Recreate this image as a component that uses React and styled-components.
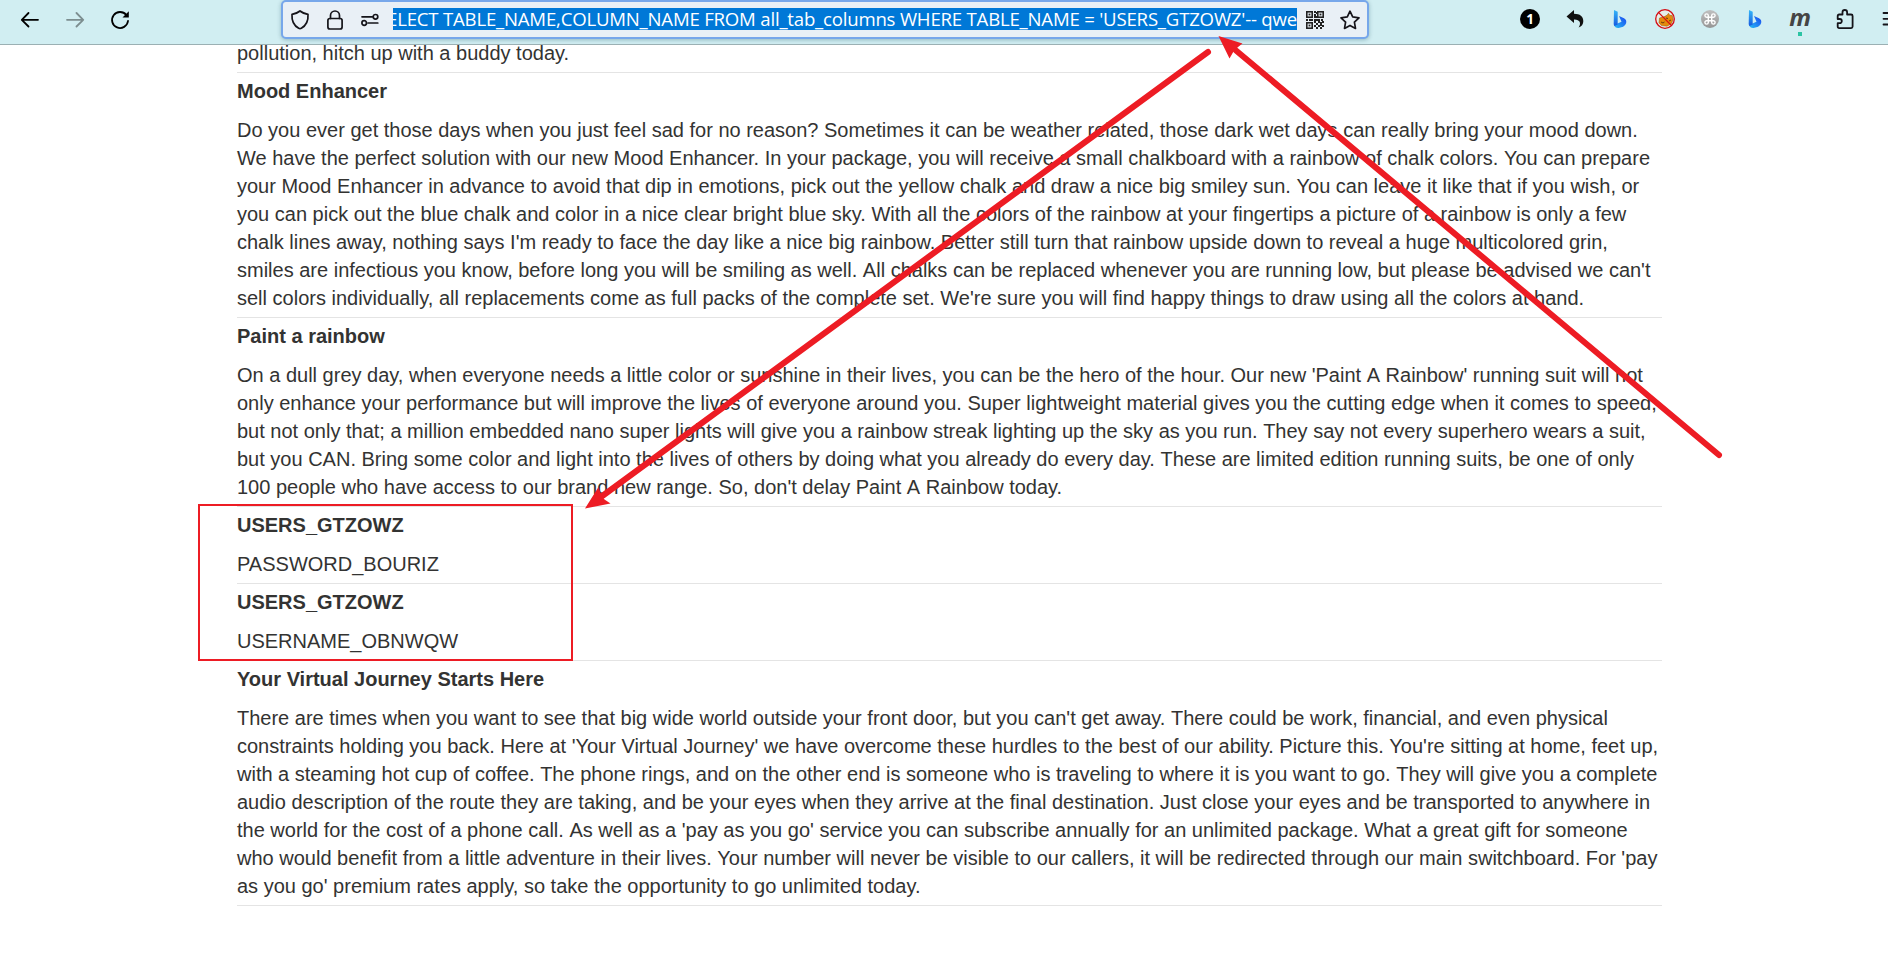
import React from "react";
import styled, { createGlobalStyle, css } from "styled-components";

const GlobalStyle = createGlobalStyle`
  html, body { margin: 0; padding: 0; background: #fff; }
  * { box-sizing: border-box; }
`;

const Window = styled.div`
  position: relative;
  display: flex;
  flex-direction: column;
  width: 1888px;
  height: 954px;
  overflow: hidden;
  background: #fff;
`;

const Toolbar = styled.header`
  flex: none;
  display: flex;
  align-items: flex-start;
  height: 45px;
  background: #d1eef2;
  border-bottom: 1px solid #9bb0b3;
  overflow: hidden;
`;

const NavGroup = styled.nav`
  flex: none;
  display: flex;
  width: 281px;
  padding: 5px 0 0 15px;
  gap: 15px;
`;

const IconSlot = styled.span`
  flex: none;
  display: flex;
  align-items: center;
  justify-content: center;
  width: 30px;
  height: 30px;
  opacity: ${(p) => (p.$dim ? 0.4 : 1)};
  svg { display: block; overflow: visible; }
`;

const AddressBar = styled.div`
  flex: none;
  display: flex;
  align-items: center;
  width: 1088px;
  height: 39px;
  padding: 0 2px;
  background: #e9f0f6;
  border: 2px solid #77a7ea;
  border-radius: 5px;
  box-shadow: 0 1px 4px rgba(0, 60, 80, 0.3);
`;

const AddressIcons = styled.div`
  flex: none;
  display: flex;
  gap: 5px;
  ${(p) =>
    p.$side === "start"
      ? css`width: 108px;`
      : css`padding-left: 3px;`}
`;

const Selection = styled.div`
  flex: none;
  display: flex;
  justify-content: flex-end;
  width: 904px;
  height: 22px;
  margin-bottom: 1px;
  overflow: hidden;
  background: #0078d7;
  color: #fff;
  font: 18.6px/22px "Open Sans", "Noto Sans", sans-serif;
  letter-spacing: -0.2px;
  white-space: pre;
`;

const Extensions = styled.div`
  flex: none;
  display: flex;
  gap: 15px;
  padding: 4px 0 0 146px;
`;

const MarkSlot = styled(IconSlot)`
  flex-direction: column;
  justify-content: flex-start;
  height: 36px;
  color: #454545;
  font: italic bold 24px/28px "Open Sans", "Noto Sans", sans-serif;
`;

const MarkLetter = styled.span`
  height: 28px;
  margin-top: -1px;
  margin-bottom: 1px;
`;

const ActiveDot = styled.i`
  width: 4px;
  height: 4px;
  background: #2bc4a4;
`;

const Page = styled.main`
  flex: 1;
  overflow: hidden;
  padding-left: 237px;
  color: #333332;
  font: 20px/28px "Liberation Sans", Arial, sans-serif;
`;

const Listing = styled.div`
  width: 1424.6px;
  margin-top: -6px;
`;

const Entry = styled.section`
  padding-bottom: 5px;
  border-bottom: 1px solid #e4e4e4;
`;

const Title = styled.h2`
  margin: 0;
  padding: 4px 0 11px;
  font: bold 20px/28px "Liberation Sans", Arial, sans-serif;
`;

const Line = styled.div`
  height: 28px;
  white-space: pre;
`;

const PlainSpace = styled.span`
  font-kerning: none;
`;

const Annotations = styled.svg`
  position: absolute;
  inset: 0;
  pointer-events: none;
`;

const entries = [
  { lines: ["pollution, hitch up with a buddy today."] },
  {
    title: "Mood Enhancer",
    lines: [
      "Do you ever get those days when you just feel sad for no reason? Sometimes it can be weather related, those dark wet days can really bring your mood down.",
      "We have the perfect solution with our new Mood Enhancer. In your package, you will receive a small chalkboard with a rainbow of chalk colors. You can prepare",
      "your Mood Enhancer in advance to avoid that dip in emotions, pick out the yellow chalk and draw a nice big smiley sun. You can leave it like that if you wish, or",
      "you can pick out the blue chalk and color in a nice clear bright blue sky. With all the colors of the rainbow at your fingertips a picture of a rainbow is only a few",
      "chalk lines away, nothing says I'm ready to face the day like a nice big rainbow. Better still turn that rainbow upside down to reveal a huge multicolored grin,",
      "smiles are infectious you know, before long you will be smiling as well. All chalks can be replaced whenever you are running low, but please be advised we can't",
      "sell colors individually, all replacements come as full packs of the complete set. We're sure you will find happy things to draw using all the colors at hand.",
    ],
  },
  {
    title: "Paint a rainbow",
    lines: [
      "On a dull grey day, when everyone needs a little color or sunshine in their lives, you can be the hero of the hour. Our new 'Paint A Rainbow' running suit will not",
      "only enhance your performance but will improve the lives of everyone around you. Super lightweight material gives you the cutting edge when it comes to speed,",
      "but not only that; a million embedded nano super lights will give you a rainbow streak lighting up the sky as you run. They say not every superhero wears a suit,",
      "but you CAN. Bring some color and light into the lives of others by doing what you already do every day. These are limited edition running suits, be one of only",
      "100 people who have access to our brand new range. So, don't delay Paint A Rainbow today.",
    ],
  },
  { title: "USERS_GTZOWZ", lines: ["PASSWORD_BOURIZ"] },
  { title: "USERS_GTZOWZ", lines: ["USERNAME_OBNWQW"] },
  {
    title: "Your Virtual Journey Starts Here",
    lines: [
      "There are times when you want to see that big wide world outside your front door, but you can't get away. There could be work, financial, and even physical",
      "constraints holding you back. Here at 'Your Virtual Journey' we have overcome these hurdles to the best of our ability. Picture this. You're sitting at home, feet up,",
      "with a steaming hot cup of coffee. The phone rings, and on the other end is someone who is traveling to where it is you want to go. They will give you a complete",
      "audio description of the route they are taking, and be your eyes when they arrive at the final destination. Just close your eyes and be transported to anywhere in",
      "the world for the cost of a phone call. As well as a 'pay as you go' service you can subscribe annually for an unlimited package. What a great gift for someone",
      "who would benefit from a little adventure in their lives. Your number will never be visible to our callers, it will be redirected through our main switchboard. For 'pay",
      "as you go' premium rates apply, so take the opportunity to go unlimited today.",
    ],
  },
];

// Spaces next to A, T and Y keep their full advance instead of being kerned.
const BodyText = ({ text }) =>
  text
    .split(/( (?=[ATY])|(?<=A) )/)
    .map((part, i) => (part === " " ? <PlainSpace key={i}> </PlainSpace> : part));

const stroke = (w = 1.7) => ({
  fill: "none",
  stroke: "#15141a",
  strokeWidth: w,
  strokeLinecap: "round",
  strokeLinejoin: "round",
});

const ArrowIcon = ({ flip }) => (
  <svg width="20" height="20" viewBox="0 0 20 20" transform={flip ? "scale(-1 1)" : undefined}>
    <path {...stroke(1.8)} stroke="#000" d="M18 9.8H2M8.5 3 1.8 9.8l6.7 6.7" />
  </svg>
);

const ReloadIcon = () => (
  <svg width="20" height="20" viewBox="0 0 20 20">
    <path {...stroke(1.8)} stroke="#000" d="M16.3 5A8 8 0 1 0 18 11" />
    <path fill="#000" d="M18.8 1.2v6.3h-6.3z" />
  </svg>
);

const ShieldIcon = () => (
  <svg width="20" height="20" viewBox="0 0 20 20">
    <path {...stroke()} d="M10 1c2 1.8 4.7 2.7 8 3.3.4 5.8-1.8 11.3-6.7 14q-1.3.7-2.6 0C3.8 15.6 1.6 10.1 2 4.3 5.3 3.700 8 2.800 10 1z" />
  </svg>
);

const LockIcon = () => (
  <svg width="20" height="20" viewBox="0 0 20 20">
    <rect {...stroke()} x="2.900" y="8.500" width="14.200" height="10.500" rx="2" />
    <path {...stroke()} d="M5.500 8.500v-3a4.500 4.500 0 0 1 9 0v3" />
  </svg>
);

const PermissionsIcon = () => (
  <svg width="20" height="20" viewBox="0 0 20 20">
    <path {...stroke()} d="M2 6.800h10.500M8 13h9.800" />
    <circle {...stroke()} cx="15.500" cy="6.800" r="2.300" />
    <circle {...stroke()} cx="4.200" cy="13" r="2.300" />
  </svg>
);

const QR_CELLS = [
  [8, 0], [10, 1], [8, 3], [8, 5], [10, 5], [0, 8], [3, 8], [5, 8], [8, 8], [10, 8], [12, 8], [15, 8],
  [8, 10], [12, 10], [14, 11], [16, 10], [10, 12], [14, 13], [8, 14], [12, 14], [16, 14], [10, 16], [14, 16],
];

const QrIcon = () => (
  <svg width="18" height="18" viewBox="0 0 18 18">
    {[[0, 0], [11, 0], [0, 11]].map(([x, y]) => (
      <g key={`${x}-${y}`}>
        <rect x={x + 0.8} y={y + 0.8} width="5.400" height="5.400" fill="none" stroke="#222" strokeWidth="1.600" />
        <rect x={x + 2.6} y={y + 2.6} width="1.800" height="1.800" fill="#222" />
      </g>
    ))}
    {QR_CELLS.map(([x, y]) => (
      <rect key={`${x}.${y}`} x={x} y={y} width="2" height="2" fill="#222" />
    ))}
  </svg>
);

const StarIcon = () => (
  <svg width="20" height="20" viewBox="0 0 20 20">
    <path {...stroke()} d="m10 1.200 2.700 5.700 6.300.9-4.600 4.400 1.100 6.200L10 15.400l-5.500 3 1.100-6.200L1 7.800l6.300-.9z" />
  </svg>
);

const CounterIcon = () => (
  <svg width="20" height="20" viewBox="0 0 20 20">
    <circle cx="10" cy="10" r="10" fill="#000" />
    <text x="10" y="14.800" textAnchor="middle" fill="#fff" fontFamily="Open Sans, sans-serif" fontWeight="700" fontSize="13.500">1</text>
  </svg>
);

const UndoIcon = () => (
  <svg width="20" height="20" viewBox="0 0 20 20">
    <path fill="#111" d="M1.500 7.500 9 1v3.800c6 0 9.300 2.700 9.300 7.400 0 3-1.700 5.300-4.700 6.300 3-4.600 1.200-8.300-4.600-8.100V14z" />
  </svg>
);

const BingIcon = () => (
  <svg width="20" height="20" viewBox="0 0 20 20">
    <defs>
      <linearGradient id="bing-stem" x1="0" y1="0" x2="0" y2="1">
        <stop offset="0" stopColor="#35b8f8" />
        <stop offset="1" stopColor="#1759df" />
      </linearGradient>
      <linearGradient id="bing-bowl" x1="0" y1="1" x2="1" y2="0">
        <stop offset="0" stopColor="#28bdf4" />
        <stop offset="1" stopColor="#1943f0" />
      </linearGradient>
    </defs>
    <path fill="url(#bing-bowl)" d="m9 7 5 2.300q3 1.600 2.100 5-.8 2.400-3 3.400L8.600 19Q5 19.300 4 16l7.500-3.300z" />
    <path fill="url(#bing-stem)" d="m4 1 3.700 1.700v12.800L4.500 17Q3.700 16 3.700 15z" />
  </svg>
);

const BlockedCatIcon = () => (
  <svg width="20" height="20" viewBox="0 0 20 20">
    <circle cx="10" cy="10" r="9.300" fill="#e6eee9" />
    <path fill="#e58a0b" stroke="#8d5310" strokeWidth=".5" d="M4.500 9 9 7.800l3-1.500 1.500-2 1.200 2 2.600.2.800 4.200-1.800 4-4.300 2.500-5.500-.6L4 13.800z" />
    <path fill="none" stroke="#593410" strokeWidth=".9" d="m6 13 2 1 1.500-1M11 9l2 .5M14 12l2-1" />
    <circle cx="10" cy="10" r="9.300" fill="none" stroke="#d40b12" strokeWidth="1.300" />
    <path stroke="#d40b12" strokeWidth="1.300" d="m3.400 3.400 13.200 13.200" />
  </svg>
);

const CommandIcon = () => (
  <svg width="18" height="18" viewBox="0 0 18 18">
    <defs>
      <linearGradient id="command-disc" x1="0" y1="0" x2="0" y2="1">
        <stop offset="0" stopColor="#c0c0c0" />
        <stop offset="1" stopColor="#959595" />
      </linearGradient>
    </defs>
    <circle cx="9" cy="9" r="9" fill="url(#command-disc)" />
    <path fill="none" stroke="#fff" strokeWidth="1.400" d="M7.300 5.600v6.800a1.700 1.700 0 1 1-1.700-1.700h6.800a1.700 1.700 0 1 1-1.700 1.700V5.600a1.700 1.700 0 1 1 1.700 1.700H5.600a1.700 1.700 0 1 1 1.700-1.700z" />
  </svg>
);

const PuzzleIcon = () => (
  <svg width="20" height="20" viewBox="0 0 20 20">
    <path {...stroke(1.8)} d="M2.700 10V7q0-1.500 1.500-1.500h3.300V3.300a2.300 2.300 0 0 1 4.600 0v2.200h4q1.500 0 1.500 1.500v10.600q0 1.500-1.500 1.500H4.200q-1.500 0-1.500-1.500v-3.400h2a2.100 2.100 0 0 0 0-4.200z" />
  </svg>
);

const MenuIcon = () => (
  <svg width="20" height="20" viewBox="0 0 20 20">
    <path {...stroke(1.8)} d="M3.500 4h14M3.500 9.800h14M3.500 15.500h14" />
  </svg>
);

export default function App() {
  return (
    <Window>
      <GlobalStyle />
      <Toolbar>
        <NavGroup>
          <IconSlot><ArrowIcon /></IconSlot>
          <IconSlot $dim><ArrowIcon flip /></IconSlot>
          <IconSlot><ReloadIcon /></IconSlot>
        </NavGroup>
        <AddressBar>
          <AddressIcons $side="start">
            <IconSlot><ShieldIcon /></IconSlot>
            <IconSlot><LockIcon /></IconSlot>
            <IconSlot><PermissionsIcon /></IconSlot>
          </AddressIcons>
          <Selection>
            <span>SELECT TABLE_NAME,COLUMN_NAME FROM all_tab_columns WHERE TABLE_NAME = 'USERS_GTZOWZ'-- qwe</span>
          </Selection>
          <AddressIcons $side="end">
            <IconSlot><QrIcon /></IconSlot>
            <IconSlot><StarIcon /></IconSlot>
          </AddressIcons>
        </AddressBar>
        <Extensions>
          <IconSlot><CounterIcon /></IconSlot>
          <IconSlot><UndoIcon /></IconSlot>
          <IconSlot><BingIcon /></IconSlot>
          <IconSlot><BlockedCatIcon /></IconSlot>
          <IconSlot><CommandIcon /></IconSlot>
          <IconSlot><BingIcon /></IconSlot>
          <MarkSlot><MarkLetter>m</MarkLetter><ActiveDot /></MarkSlot>
          <IconSlot><PuzzleIcon /></IconSlot>
          <IconSlot><MenuIcon /></IconSlot>
        </Extensions>
      </Toolbar>
      <Page>
        <Listing>
          {entries.map((entry, i) => (
            <Entry key={i}>
              {entry.title && <Title>{entry.title}</Title>}
              {entry.lines.map((line) => (
                <Line key={line}><BodyText text={line} /></Line>
              ))}
            </Entry>
          ))}
        </Listing>
      </Page>
      <Annotations width="1888" height="954" viewBox="0 0 1888 954">
        <rect x="199" y="505" width="373" height="155" fill="none" stroke="#ed1c24" strokeWidth="2" />
        <g stroke="#ed1c24" strokeWidth="6" strokeLinecap="round">
          <path d="M1208 52 603 495.500" />
          <path d="M1719 455 1236 50.500" />
        </g>
        <g fill="#ed1c24">
          <path d="m585 508.500 13.500-21.500 2.500 7 3.500 5.500 6 4z" />
          <path d="m1218.500 36 11 22.500 4-7 4.500-4.500 4.500-3.500z" />
        </g>
      </Annotations>
    </Window>
  );
}
